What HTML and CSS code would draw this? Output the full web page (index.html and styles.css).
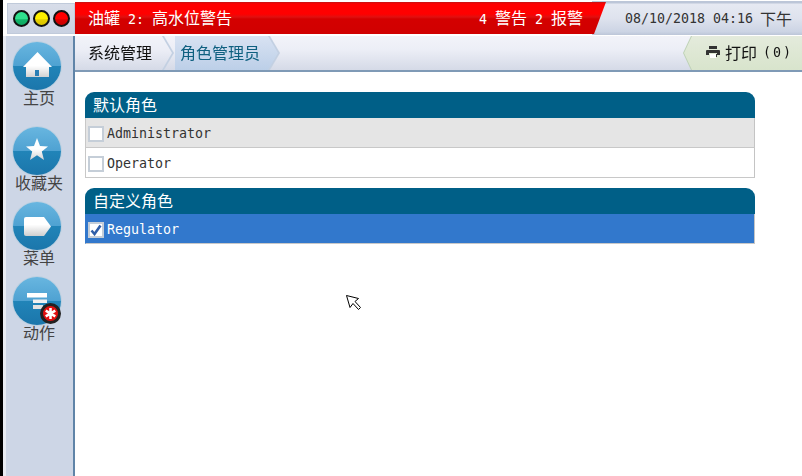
FILE: index.html
```html
<!DOCTYPE html>
<html lang="zh-CN">
<head>
  <meta charset="UTF-8" />
  <title>角色管理员</title>
  <link rel="stylesheet" href="styles.css">
</head>
<body>
  <div class="screen">
    <!-- Top status bar -->
    <header class="topbar">
      <div class="lights">
        <span class="light light-green"></span>
        <span class="light light-yellow"></span>
        <span class="light light-red"></span>
      </div>
      <div class="alarm">
        <span>油罐<span class="num"> 2: </span>高水位警告</span>
        <span><span class="num">4 </span>警告<span class="num"> 2 </span>报警</span>
      </div>
      <div class="clock"><span class="num">08/10/2018 04:16</span><span>下午</span></div>
    </header>

    <div class="main">
      <!-- Left nav -->
      <nav class="sidebar">
        <div class="nav-item">
          <span class="nav-ball">
            <svg width="29" height="28" viewBox="0 0 29 28"><defs><linearGradient id="g1" x1="0" y1="0" x2="0" y2="1"><stop offset="0.55" stop-color="#fff"/><stop offset="1" stop-color="#d2d2d2"/></linearGradient></defs><path fill="url(#g1)" d="M14.5 0 L29 15 H26 V25 H3 V15 H0 Z"/><rect x="12" y="18" width="4" height="6" fill="#2a7fb5"/></svg>
          </span>
          <span class="nav-label">主页</span>
        </div>
        <div class="nav-item nav-item-gap">
          <span class="nav-ball">
            <svg width="22" height="26" viewBox="0 0 22 26"><defs><linearGradient id="g2" x1="0" y1="0" x2="0" y2="22" gradientUnits="userSpaceOnUse"><stop offset="0.5" stop-color="#fff"/><stop offset="1" stop-color="#d2d2d2"/></linearGradient></defs><path fill="url(#g2)" d="M11 0 L14 8 L22 8.4 L15.8 13.4 L18 22 L11 17.2 L4 22 L6.2 13.4 L0 8.4 L8 8 Z"/></svg>
          </span>
          <span class="nav-label">收藏夹</span>
        </div>
        <div class="nav-item">
          <span class="nav-ball">
            <svg width="27" height="19" viewBox="0 0 27 19"><defs><linearGradient id="g3" x1="0" y1="0" x2="0" y2="1"><stop offset="0.4" stop-color="#fff"/><stop offset="1" stop-color="#cfcfcf"/></linearGradient></defs><path fill="url(#g3)" d="M2 0 H20 L27 9.5 L20 19 H2 Q0 19 0 17 V2 Q0 0 2 0 Z"/></svg>
          </span>
          <span class="nav-label">菜单</span>
        </div>
        <div class="nav-item">
          <span class="nav-ball">
            <svg width="20" height="16" viewBox="0 0 20 16"><rect width="20" height="4.5" fill="#fff"/><rect x="6" y="6.5" width="14" height="3.5" fill="#f0f0f0"/><rect x="6" y="12" width="10" height="4" fill="#e2e2e2"/></svg>
            <span class="badge">
              <svg width="13" height="13" viewBox="0 0 13 13"><path d="M6.5 1 V12 M1.7 3.7 L11.3 9.3 M11.3 3.7 L1.7 9.3" stroke="#fff" stroke-width="2.6"/></svg>
            </span>
          </span>
          <span class="nav-label">动作</span>
        </div>
      </nav>

      <div class="right">
        <!-- Breadcrumb -->
        <div class="crumbs">
          <div class="crumb-edge">
            <div class="crumb">系统管理</div>
          </div>
          <div class="crumb-edge">
            <div class="crumb crumb-active">角色管理员</div>
          </div>
          <div class="print-edge">
            <div class="print">
              <svg width="14" height="12" viewBox="0 0 14 12"><path fill="#333" d="M3 0h8v3H3zM1 4h12q1 0 1 1v4h-3V7H3v2H0V5q0-1 1-1z"/><path fill="#fff" d="M4 8h6v4H4z"/><path fill="#333" d="M10 8h1v3h-1z"/></svg>
              <span>打印</span>
              <span class="print-count num">(0)</span>
            </div>
          </div>
        </div>

        <!-- Content -->
        <div class="content">
          <section class="panel">
            <h3 class="panel-title">默认角色</h3>
            <div class="row row-grey"><span class="check"></span>Administrator</div>
            <div class="row"><span class="check"></span>Operator</div>
          </section>
          <section class="panel">
            <h3 class="panel-title">自定义角色</h3>
            <div class="row row-selected">
              <span class="check">
                <svg width="12" height="12" viewBox="0 0 12 12"><path d="M1.5 6.5 L4.5 10 L10.5 1.5" fill="none" stroke="#2f5ea8" stroke-width="2.6"/></svg>
              </span>Regulator
            </div>
          </section>
          <svg class="cursor" width="16" height="16" viewBox="0 0 16 16"><path d="M0.5 0.5 L12.5 3.5 L9 6.5 L14.5 12.5 L12.5 14.5 L7 8.5 L4 12.5 Z" fill="#fff" stroke="#000"/></svg>
        </div>
      </div>
    </div>
  </div>
</body>
</html>
```

FILE: styles.css
```css
* {
  box-sizing: border-box;
}

html, body {
  margin: 0;
  padding: 0;
}

body {
  width: 802px;
  height: 476px;
  overflow: hidden;
  background: #fff;
  font-family: "DejaVu Sans Mono", "Noto Sans CJK SC", monospace;
  font-size: 16px;
}

.screen {
  width: 802px;
  height: 476px;
  display: flex;
  flex-direction: column;
  border-left: 3px solid #000;
}

/* latin text is narrower than the CJK next to it */
.num {
  font-size: 13.3px;
  white-space: pre;
}

/* top bar */
.topbar {
  height: 36px;
  flex: none;
  display: flex;
  align-items: flex-start;
  background: #fff;
}

.lights {
  width: 68px;
  height: 31px;
  margin: 3px 0 0 4px;
  padding-left: 5px;
  display: flex;
  align-items: center;
  gap: 3px;
  background: linear-gradient(#d8dde9, #c9d2e2);
  border: 1px solid #c0cada;
}

.light {
  width: 17px;
  height: 17px;
  border-radius: 50%;
  border: 2px solid #111;
}

.light-green { background: linear-gradient(#2fe08e 0, #2fe08e 50%, #12b56a 60%, #0fa862 100%); }
.light-yellow { background: linear-gradient(#fff000 0, #fff000 50%, #e6d000 60%, #d9c400 100%); }
.light-red { background: linear-gradient(#ff0000 0, #ff0000 50%, #dc0000 60%, #c80000 100%); }

.alarm {
  width: 531px;
  height: 32px;
  margin-top: 2px;
  padding: 0 23px 2px 13px;
  display: flex;
  justify-content: space-between;
  align-items: center;
  color: #fff;
  background: linear-gradient(#c41414 0, #ff0000 2px, #ff0000 12px, #e01010 15px, #d40000 17px, #d00000 100%);
  clip-path: polygon(0 0, 100% 0, 519px 100%, 0 100%);
}

.clock {
  flex: 1;
  height: 34px;
  margin: 1px 0 0 -14px;
  padding-left: 33px;
  display: flex;
  align-items: center;
  gap: 7px;
  color: #333;
  background: linear-gradient(#bcc6d8 0, #bcc6d8 2px, #e6e9f2 3px, #dfe3ee 50%, #ccd4e4 90%, #bcc6d8 100%);
}

/* layout under top bar */
.main {
  flex: 1;
  display: flex;
  min-height: 0;
}

.sidebar {
  width: 72px;
  flex: none;
  padding-top: 6px;
  display: flex;
  flex-direction: column;
  align-items: center;
  background: #cdd6e6;
  border-left: 3px solid #e8ebf2;
  border-right: 2px solid #5f84a8;
}

.nav-item {
  height: 75px;
  display: flex;
  flex-direction: column;
  align-items: center;
  margin-left: -5px;
}

.nav-item-gap {
  margin-top: 10px;
}

.nav-ball {
  position: relative;
  width: 48px;
  height: 48px;
  flex: none;
  display: flex;
  align-items: center;
  justify-content: center;
  border-radius: 50%;
  background: linear-gradient(#68b6e0 0, #4fa2d2 49%, #2184b8 51%, #1b76ab 100%);
  box-shadow: 0 0 0 1px #bcd0e0;
}

.nav-label {
  margin: -1px 0 0 4px;
  line-height: 20px;
  color: #444;
}

.badge {
  position: absolute;
  right: 0;
  bottom: 1px;
  width: 21px;
  height: 21px;
  display: flex;
  align-items: center;
  justify-content: center;
  border-radius: 50%;
  border: 3px solid #222;
  background: #e01010;
}

.right {
  flex: 1;
  display: flex;
  flex-direction: column;
  min-width: 0;
}

/* breadcrumb */
.crumbs {
  height: 36px;
  flex: none;
  display: flex;
  align-items: stretch;
  background: linear-gradient(#f2f3f9 0, #eceef6 40%, #d5dae7 100%);
  border-bottom: 2px solid #7f9ab6;
  color: #111;
}

/* clip-path eats borders, so the chevron edge is a shadow on a wrapper */
.crumb-edge {
  display: flex;
  filter: drop-shadow(2px 0 0 #c3d0e2);
}

.crumb {
  width: 97px;
  padding: 0 0 2px 13px;
  display: flex;
  align-items: center;
  background: linear-gradient(#f2f3f9 0, #eceef6 40%, #d5dae7 100%);
  clip-path: polygon(0 0, calc(100% - 10px) 0, 100% 50%, calc(100% - 10px) 100%, 0 100%);
}

.crumb-active {
  width: 103px;
  margin-left: 3px;
  padding-left: 5px;
  color: #0f6080;
  background: linear-gradient(#d8e2f2, #bccfe8);
}

.print-edge {
  margin-left: auto;
  display: flex;
  filter: drop-shadow(-1px 0 0 #bcd0b4);
}

.print {
  width: 118px;
  padding: 0 0 2px 22px;
  display: flex;
  align-items: center;
  gap: 5px;
  color: #111;
  background: linear-gradient(#e4ebdc, #d8e4cc);
  clip-path: polygon(8px 0, 100% 0, 100% 100%, 8px 100%, 0 50%);
}

.print-count {
  margin-left: 1px;
  letter-spacing: 2px;
}

/* content */
.content {
  position: relative;
  flex: 1;
  padding: 20px 0 0 10px;
  background: #fff;
}

.panel {
  width: 670px;
  margin-bottom: 10px;
}

.panel-title {
  height: 26px;
  margin: 0;
  padding-left: 8px;
  font-size: 16px;
  font-weight: normal;
  line-height: 28px;
  color: #fff;
  background: #005f87;
  border-radius: 9px 9px 0 0;
}

.row {
  height: 30px;
  padding: 2px 0 0 2px;
  display: flex;
  align-items: center;
  gap: 3px;
  font-size: 13.3px;
  color: #333;
  background: #fff;
  border-left: 1px solid #c8c8c8;
  border-right: 1px solid #c4c4c4;
  border-bottom: 1px solid #c8c8c8;
}

.row-grey {
  background: #e5e5e5;
}

.row-selected {
  color: #fff;
  background: #3278cc;
  border-left-color: #3278cc;
}

.check {
  width: 16px;
  height: 16px;
  flex: none;
  display: flex;
  align-items: center;
  justify-content: center;
  background: #fff;
  border: 2px solid #c5ced8;
}

.cursor {
  position: absolute;
  left: 271px;
  top: 223px;
}
```
